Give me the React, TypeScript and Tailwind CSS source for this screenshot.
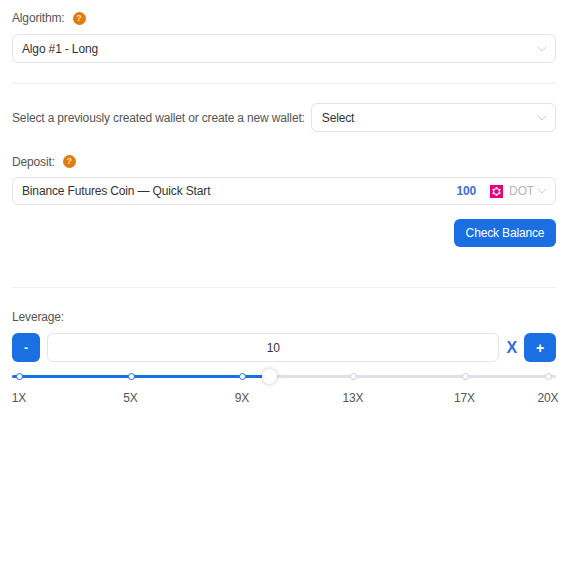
import * as React from "react";
import { ChevronDown } from "lucide-react";

/* help badge next to the labels */
function Help() {
  return (
    <span className="inline-flex h-[13px] w-[13px] items-center justify-center rounded-full bg-[#e07b0c] text-[9px] font-bold leading-none tracking-normal text-[#f8e3c8]">
      ?
    </span>
  );
}

function DotLogo() {
  return (
    <svg width="13" height="13" viewBox="0 0 13 13" aria-hidden>
      <rect width="13" height="13" fill="#e6007a" />
      <circle cx="6.5" cy="6.5" r="2.9" fill="none" stroke="#f9c6e0" strokeWidth="1.3" />
      <g fill="#ffffff">
        <circle cx="6.5" cy="2.9" r="1" />
        <circle cx="6.5" cy="10.1" r="1" />
        <circle cx="3.4" cy="4.7" r="1" />
        <circle cx="9.6" cy="4.7" r="1" />
        <circle cx="3.4" cy="8.3" r="1" />
        <circle cx="9.6" cy="8.3" r="1" />
      </g>
    </svg>
  );
}

const MARKS = [
  { label: "1X", pos: 7, active: true },
  { label: "5X", pos: 118.5, active: true },
  { label: "9X", pos: 230, active: true },
  { label: "13X", pos: 341, active: false },
  { label: "17X", pos: 452.5, active: false },
  { label: "20X", pos: 536, active: false },
];

function LeverageSlider() {
  return (
    <div className="relative mt-[10px] h-[10px]">
      <div className="absolute left-0 right-0 top-[3px] h-[3px] rounded-full bg-[#e0e0e6]" />
      <div className="absolute left-0 top-[3px] h-[3px] w-[258px] rounded-full bg-[#1a6fe3]" />
      {MARKS.map((m) => (
        <span
          key={m.label}
          style={{ left: m.pos - 3 }}
          className={
            m.active
              ? "absolute top-[1px] h-[7px] w-[7px] rounded-full border border-[#1a6fe3] bg-white"
              : "absolute top-[1px] h-[7px] w-[7px] rounded-full border border-[#c9c9f0] bg-white"
          }
        />
      ))}
      <span className="absolute left-[250px] top-[-3px] h-[15px] w-[15px] rounded-full bg-white shadow-[0_0_4px_rgba(0,0,0,0.25)]" />
    </div>
  );
}

export default function App() {
  return (
    <div className="h-[574px] w-[565px] overflow-hidden bg-white pl-3 pr-[9px] font-['Liberation_Sans',Arial,sans-serif] text-xs tracking-[-0.15px] text-[#333]">
      {/* Algorithm */}
      <div className="flex h-[34px] items-center gap-2 pt-0.5 text-[#555]">
        <span>Algorithm:</span>
        <Help />
      </div>
      <div className="flex h-[29px] items-center justify-between rounded-md border border-[#e4e4ea] pl-[9px] pr-[5px]">
        <span>Algo #1 - Long</span>
        <ChevronDown className="h-4 w-4 text-[#c4c4c4]" strokeWidth={1.25} />
      </div>

      <hr className="mt-5 border-[#efeff2]" />

      {/* Wallet */}
      <div className="mt-[19px] flex items-center gap-[6px]">
        <span className="whitespace-nowrap text-[#555]">Select a previously created wallet or create a new wallet:</span>
        <div className="flex h-[29px] flex-1 items-center justify-between rounded-md border border-[#e4e4ea] pl-[10px] pr-[5px]">
          <span>Select</span>
          <ChevronDown className="h-4 w-4 text-[#c4c4c4]" strokeWidth={1.25} />
        </div>
      </div>

      {/* Deposit */}
      <div className="mt-[21px] flex h-[17px] items-center gap-2 text-[#555]">
        <span>Deposit:</span>
        <Help />
      </div>
      <div className="mt-[7px] flex h-[28px] items-center rounded-md border border-[#e4e4ea] pl-[9px] pr-[5px]">
        <span className="flex-1">Binance Futures Coin — Quick Start</span>
        <span className="mr-[14px] font-bold text-[#3b6fd8]">100</span>
        <DotLogo />
        <span className="ml-[6px] text-[#b5b5b5]">DOT</span>
        <ChevronDown className="h-4 w-4 text-[#c4c4c4]" strokeWidth={1.25} />
      </div>

      <div className="mt-[14px] flex justify-end">
        <button className="h-[28px] w-[102px] rounded-md bg-[#1a6fe3] text-xs tracking-[-0.15px] text-white">Check Balance</button>
      </div>

      <hr className="mt-10 border-[#efeff2]" />

      {/* Leverage */}
      <div className="mt-[21px] h-[17px] leading-[17px] text-[#555]">Leverage:</div>
      <div className="mt-[7px] flex h-[29px] items-center">
        <button className="h-[29px] w-[28px] rounded-md bg-[#1a6fe3] text-xs font-bold text-white">-</button>
        <div className="ml-[7px] flex h-[29px] flex-1 items-center justify-center rounded-md border border-[#e4e4ea]">10</div>
        <span className="mx-[7px] text-base font-bold leading-none text-[#2f6fdc]">X</span>
        <button className="h-[29px] w-[32px] rounded-md bg-[#1a6fe3] text-sm font-bold text-white">+</button>
      </div>

      <LeverageSlider />

      <div className="relative mt-[8px] h-4 text-[#555]">
        {MARKS.map((m) => (
          <span key={m.label} style={{ left: m.pos }} className="absolute -translate-x-1/2">
            {m.label}
          </span>
        ))}
      </div>
    </div>
  );
}
